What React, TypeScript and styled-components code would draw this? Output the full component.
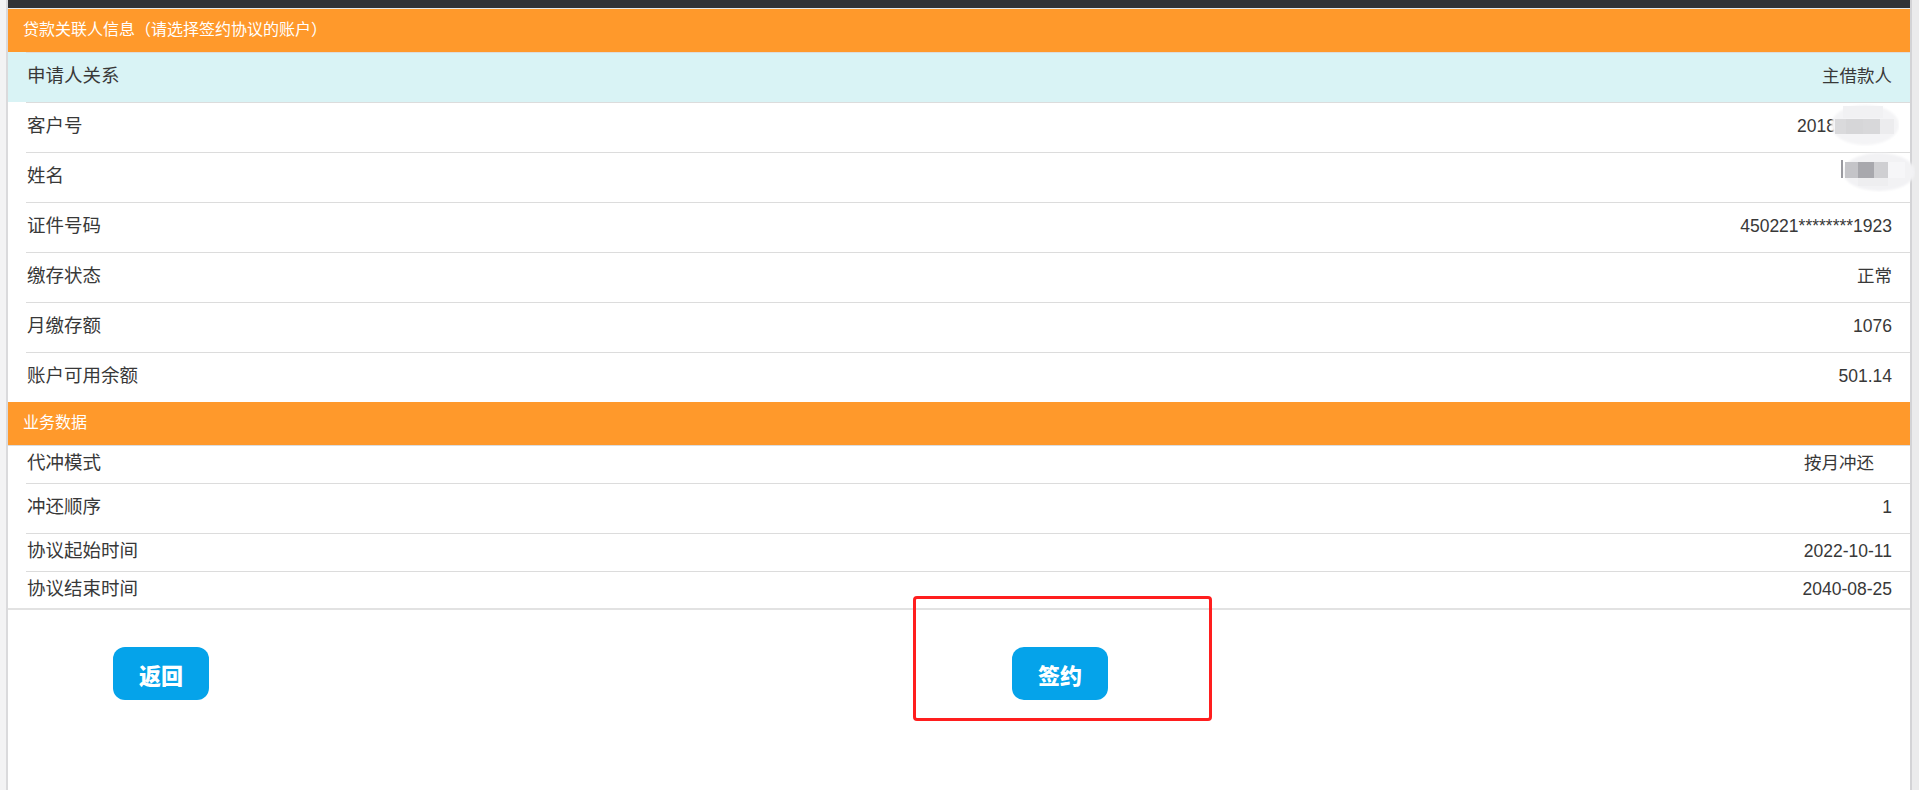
import React from 'react'
import styled, { createGlobalStyle } from 'styled-components'

const GlobalStyle = createGlobalStyle`
  html, body {
    margin: 0;
    padding: 0;
    background: #f3f3f4;
    font-family: "Liberation Sans", "Noto Sans CJK SC", sans-serif;
    color: #333;
  }
`

const Colors = {
  Orange: '#ff992b',
  Cyan: '#d9f3f5',
  Blue: '#05a3ea',
  Line: '#dcdcdc',
  Text: '#383838',
}

// h = row height including its 1px top line
type Item = { label: string; value?: string; smudge?: 'id' | 'name'; tint?: boolean; h: number; full?: boolean; shift?: number }

const borrower: Item[] = [
  { label: '申请人关系', value: '主借款人', tint: true, h: 50 },
  { label: '客户号', value: '2018', smudge: 'id', h: 50 },
  { label: '姓名', smudge: 'name', h: 50 },
  { label: '证件号码', value: '450221********1923', h: 50 },
  { label: '缴存状态', value: '正常', h: 50 },
  { label: '月缴存额', value: '1076', h: 50 },
  { label: '账户可用余额', value: '501.14', h: 50 },
]

const business: Item[] = [
  { label: '代冲模式', value: '按月冲还', h: 38, full: true, shift: 18 },
  { label: '冲还顺序', value: '1', h: 50 },
  { label: '协议起始时间', value: '2022-10-11', h: 38 },
  { label: '协议结束时间', value: '2040-08-25', h: 37 },
]

function Smudge({ kind }: { kind: 'id' | 'name' }) {
  if (kind === 'id') {
    return (
      <SmudgeBox style={{ right: -7, top: -12, width: 72, height: 42 }}>
        <svg width="72" height="42" viewBox="0 0 72 42">
          <defs>
            <filter id="sm1" x="-20%" y="-20%" width="140%" height="140%">
              <feGaussianBlur stdDeviation="1.2" />
            </filter>
          </defs>
          <ellipse cx="38" cy="21" rx="34" ry="20" fill="#f4f4f6" filter="url(#sm1)" />
          <rect x="8" y="15" width="11" height="15" fill="#dadadc" />
          <rect x="19" y="15" width="17" height="15" fill="#d6d6d8" />
          <rect x="36" y="15" width="17" height="15" fill="#d8d8da" />
          <rect x="53" y="15" width="14" height="15" fill="#ececee" />
          <rect x="16" y="2" width="40" height="12" fill="#f1f1f3" />
        </svg>
      </SmudgeBox>
    )
  }
  return (
    <SmudgeBox style={{ right: -23, top: -14, width: 74, height: 40 }}>
      <svg width="74" height="40" viewBox="0 0 74 40">
        <defs>
          <filter id="sm2" x="-20%" y="-20%" width="140%" height="140%">
            <feGaussianBlur stdDeviation="1.2" />
          </filter>
        </defs>
        <ellipse cx="38" cy="20" rx="36" ry="19" fill="#f2f2f4" filter="url(#sm2)" />
        <rect x="0" y="8" width="2" height="18" fill="#9a9aa0" />
        <rect x="4" y="10" width="13" height="16" fill="#c4c4c8" />
        <rect x="17" y="10" width="16" height="16" fill="#a8a8ad" />
        <rect x="33" y="10" width="14" height="16" fill="#cfcfd2" />
        <rect x="47" y="10" width="17" height="16" fill="#f6f6f8" />
        <rect x="17" y="26" width="30" height="8" fill="#eeeef0" />
      </svg>
    </SmudgeBox>
  )
}

function Row({ item }: { item: Item }) {
  return (
    <RowOuter $tint={item.tint} $full={item.full}>
      <RowInner $h={item.full ? item.h - 1 : item.h} $full={item.full} $shift={item.shift}>
        <Label>{item.label}</Label>
        <Value $pad={item.smudge === 'id' ? 56 : item.smudge === 'name' ? 50 : 0}>
          {item.value}
          {item.smudge && <Smudge kind={item.smudge} />}
        </Value>
      </RowInner>
    </RowOuter>
  )
}

export default function App() {
  return (
    <>
      <GlobalStyle />
      <Shell>
        <LeftGutter />
        <Panel>
          <TopBar />
          <SectionTitle>贷款关联人信息（请选择签约协议的账户）</SectionTitle>
          {borrower.map((it) => (
            <Row key={it.label} item={it} />
          ))}
          <SectionTitle>业务数据</SectionTitle>
          {business.map((it) => (
            <Row key={it.label} item={it} />
          ))}
          <Footer>
            <ActionButton>返回</ActionButton>
            <ActionButton>签约</ActionButton>
          </Footer>
          <Highlight />
        </Panel>
        <RightGutter />
      </Shell>
    </>
  )
}

/* layout */
const Shell = styled.div`
  display: flex;
  width: 100%;
  height: 790px;
  overflow: hidden;
`

const LeftGutter = styled.div`
  width: 6px;
  flex: 0 0 6px;
  background: #f3f3f4;
  border-right: 2px solid #dadadc;
`

const RightGutter = styled.div`
  width: 7px;
  flex: 0 0 7px;
  background: #ebebec;
  border-left: 2px solid #d3d3d6;
`

const Panel = styled.div`
  position: relative;
  flex: 1;
  background: #fff;
  display: flex;
  flex-direction: column;
`

const TopBar = styled.div`
  height: 8px;
  background: #333337;
  border-bottom: 1px solid #e8e8e8;
`

/* section header */
const SectionTitle = styled.div`
  height: 43px;
  box-sizing: border-box;
  display: flex;
  align-items: center;
  padding: 0 0 2px 15px;
  background: ${Colors.Orange};
  color: #fff;
  font-size: 16px;
  line-height: 18px;
`

/* rows */
const RowOuter = styled.div<{ $tint?: boolean; $full?: boolean }>`
  background: ${(p) => (p.$tint ? Colors.Cyan : '#fff')};
  border-top: ${(p) => (p.$full ? `1px solid ${Colors.Line}` : 'none')};
`

const RowInner = styled.div<{ $h: number; $full?: boolean; $shift?: number }>`
  height: ${(p) => p.$h}px;
  box-sizing: border-box;
  margin-left: 18px;
  padding: 0 ${(p) => 18 + (p.$shift || 0)}px 3px 1px;
  border-top: ${(p) => (p.$full ? 'none' : `1px solid ${Colors.Line}`)};
  display: flex;
  align-items: center;
  justify-content: space-between;
  line-height: 20px;
  color: ${Colors.Text};
`

const Label = styled.span`
  white-space: nowrap;
  font-size: 18.5px;
`

const Value = styled.span<{ $pad: number }>`
  position: relative;
  white-space: nowrap;
  padding-right: ${(p) => p.$pad}px;
  min-height: 20px;
  font-size: 17.5px;
`

const SmudgeBox = styled.span`
  position: absolute;
  display: block;
  line-height: 0;
`

/* footer */
const Footer = styled.div`
  flex: 1;
  border-top: 2px solid #e2e2e2;
  display: flex;
  align-items: flex-start;
  padding: 37px 0 0 105px;
  gap: 803px;
`

const ActionButton = styled.button`
  width: 96px;
  height: 53px;
  border: none;
  border-radius: 12px;
  background: ${Colors.Blue};
  color: #fff;
  font-family: "Noto Sans CJK SC", sans-serif;
  font-weight: 900;
  font-size: 22px;
  line-height: 1;
  padding: 0;
  cursor: pointer;
`

const Highlight = styled.div`
  position: absolute;
  left: 905px;
  top: 596px;
  width: 293px;
  height: 119px;
  border: 3px solid #ff1e1e;
  border-radius: 4px;
  pointer-events: none;
`
